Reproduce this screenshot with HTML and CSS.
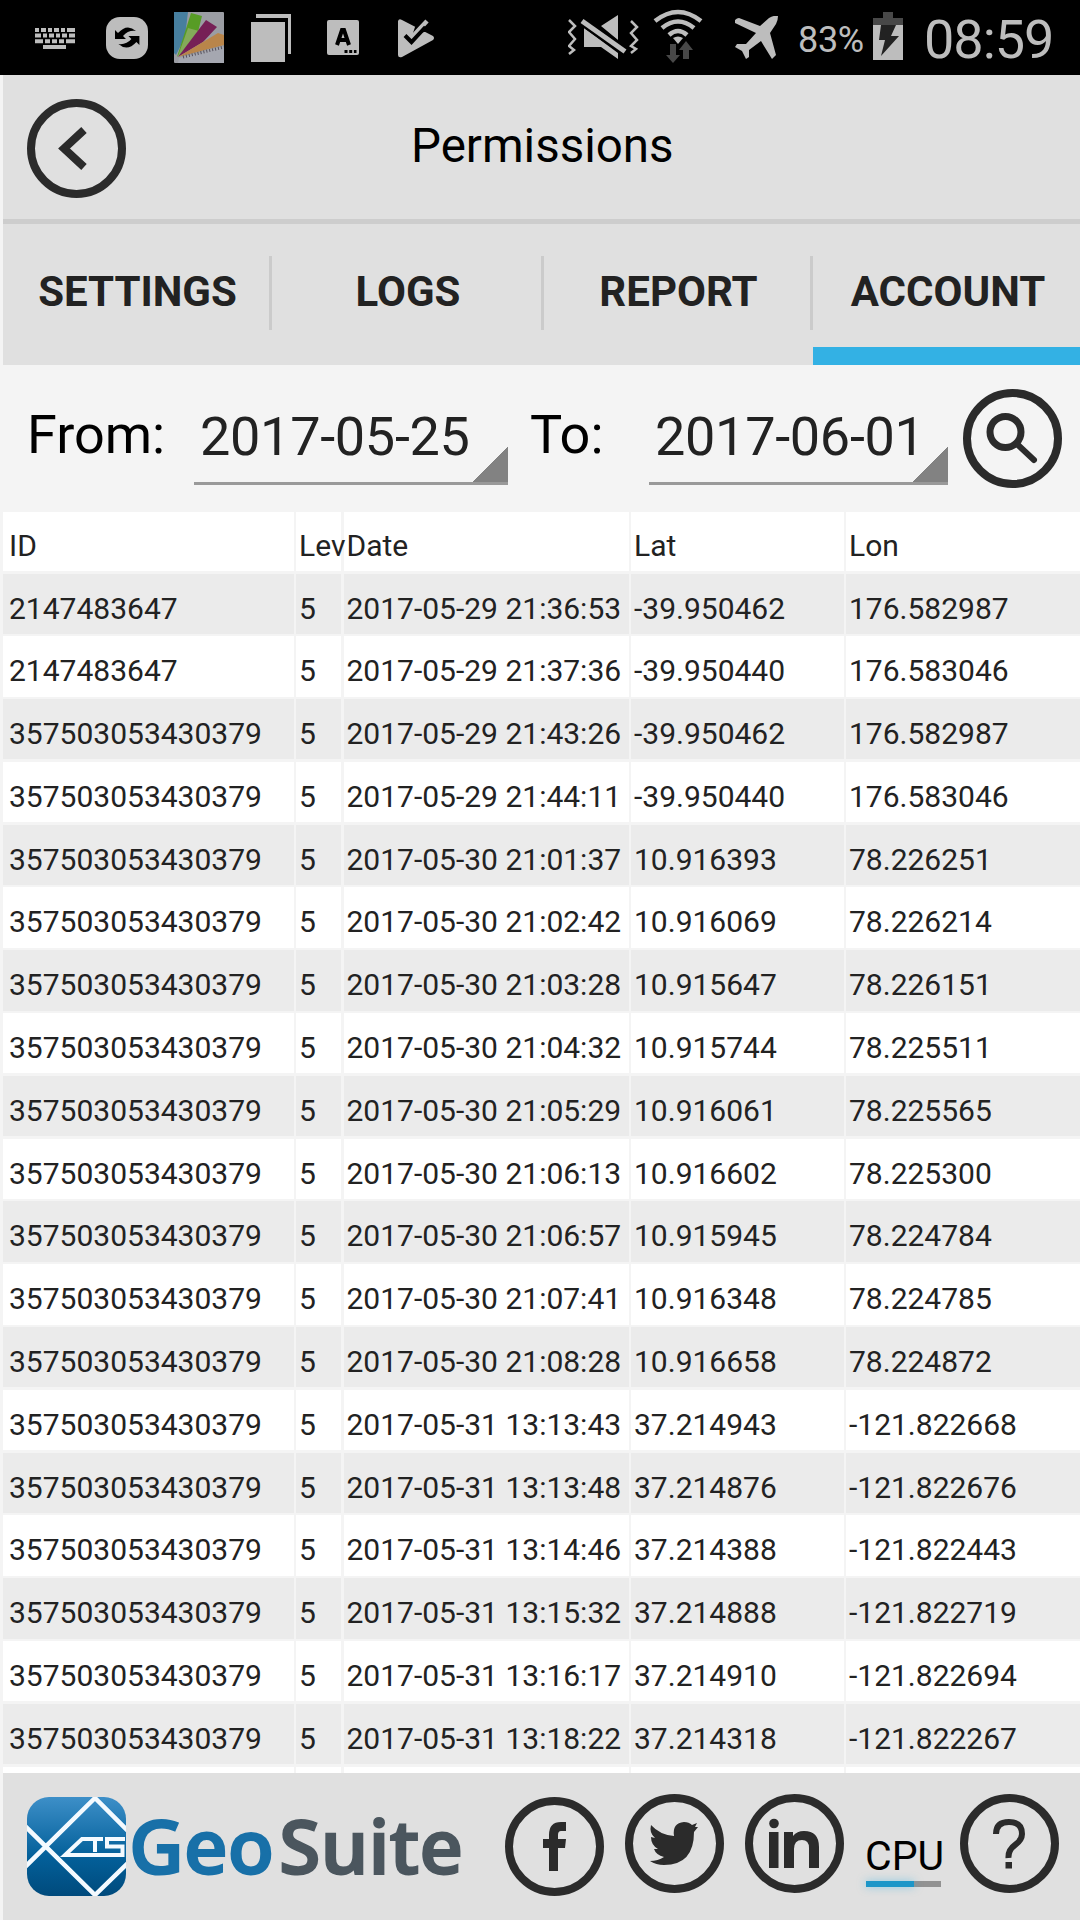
FILE: index.html
```
<!DOCTYPE html>
<html lang="en">
<head>
    <meta charset="UTF-8">
    <title>Permissions</title>
    <link rel="stylesheet" href="styles.css">
</head>
<body>
    <div class="status-bar">
        <svg class="s-keyboard" width="40" height="22" viewBox="35 28 40 22">
            <g stroke="#bdbdbd" stroke-width="4" fill="none">
                <path d="M35 30h40" stroke-dasharray="4 2 5 2 4 2 5 2 4 2 8"/>
                <path d="M35 35.5h40" stroke-dasharray="6 2 4 2 5 2 4 2 5 2 6"/>
                <path d="M35 41.2h40" stroke-dasharray="8 2 5 2 5 2 5 2 9"/>
                <path d="M43 47h23"/>
            </g>
        </svg>
        <svg class="s-sync" width="43" height="43" viewBox="106 17 43 43">
            <rect x="106" y="17" width="42" height="42" rx="14" fill="#bdbdbd"/>
            <path id="arrow" d="M115 30l3 3Q127 23 136 31Q128 30 123 36L126 39H115Z" fill="#000"/>
            <use href="#arrow" transform="rotate(180 127.200 37.500)"/>
        </svg>
        <svg class="s-fan" width="50" height="51" viewBox="174 12 50 51">
            <rect x="174" y="12" width="50" height="51" rx="1" fill="#9b9da3"/>
            <path d="M174 12h14l-3 25-9 18-2-2z" fill="#477f9f"/>
            <path d="M191 13l11 3-5 20-20 21z" fill="#579c25"/>
            <path d="M188 28l11 3-4 8-17 17z" fill="#83ab59"/>
            <path d="M206 20l11 7-14 15-25 15z" fill="#762056"/>
            <path d="M218 33l6 2v10l-46 12z" fill="#b9854a"/>
            <path d="M179 58l45-12v17h-46z" fill="#a5a7b0"/>
            <path d="M183 57l41-10" stroke="#55505c" stroke-width="3" stroke-dasharray="1 2"/>
        </svg>
        <svg class="s-pages" width="40" height="48" viewBox="251 14 40 48">
            <path d="M251 22h34v40h-34zM256 14h35v40h-3v-36h-32z" fill="#bdbdbd"/>
        </svg>
        <svg class="s-lang" width="32" height="35" viewBox="327 20 32 35">
            <rect x="327" y="20" width="32" height="35" rx="2" fill="#bdbdbd"/>
            <path d="M337 45l5-15h2l5 15M339 40h8" stroke="#000" stroke-width="4" fill="none"/>
            <path d="M344.500 51.500h12" stroke="#000" stroke-width="3" stroke-dasharray="3 1.700"/>
        </svg>
        <svg class="s-check" width="36" height="39" viewBox="398 19 36 39">
            <path d="M398 21q1-3 4-1l31 16q2 2 0 4l-31 17q-4 1-4-2z" fill="#bdbdbd"/>
            <path d="M415 27l10-10 11 14-12 1-12 4z" fill="#000"/>
            <path d="M408 32l4.500 4.500L427 21" stroke="#bdbdbd" stroke-width="4.500" fill="none"/>
            <path d="M405 35.500l6.500 6.500 14-15" stroke="#000" stroke-width="4" fill="none"/>
        </svg>
        <svg class="s-mute" width="71" height="46" viewBox="568 14 71 46">
            <path d="M601 26l17-11v25zM584 28v19h17l17 12v-6z" fill="#bdbdbd"/>
            <path d="M581 20l46 32.500" stroke="#000" stroke-width="9.500"/>
            <path d="M582 21l43 30.500" stroke="#bdbdbd" stroke-width="5"/>
            <path d="M569 20l6 6-6 6 6 7-6 7 5 4-5 4M631 21l6 6-6 6 6 7-6 6 5 3-5 4" stroke="#bdbdbd" stroke-width="2.500" fill="none"/>
        </svg>
        <svg class="s-wifi" width="50" height="54" viewBox="653 9 50 54">
            <path d="M655 21q23-18 46 0M662 28q16-13 32 0M669 35q9-8 18 0" stroke="#bdbdbd" stroke-width="4.500" fill="none"/>
            <path d="M673 38q5-3 10 0l-5 6z" fill="#bdbdbd"/>
            <path d="M670 44h6v11h4l-7 8-7-8h4zM683 59h6v-9h4l-7-9-7 9h4z" fill="#484848"/>
        </svg>
        <svg class="s-plane" width="44" height="44" viewBox="735 16 44 44">
            <path d="M735 20q2-2 4-2l21 8 9-8q5-3 9-2 0 4-2 8l-6 9 6 22-4 4-11-18-12 9v7l-3 2-4-8-7-4 2-3 9 0 10-11-21-10z" fill="#bdbdbd"/>
        </svg>
        <span class="battery-text">83%</span>
        <svg class="s-battery" width="30" height="48" viewBox="873 12 30 48">
            <path d="M873 18h10v-6h10v6h10v7h-30z" fill="#484848"/>
            <path d="M873 25h30v35h-30z" fill="#bdbdbd"/>
            <path d="M881 25h15l-5 11h8l-18 20 4-16h-6z" fill="#222"/>
        </svg>
        <span class="clock">08:59</span>
    </div>

    <div class="screen">
        <div class="header">
            <svg class="back" width="99" height="99" viewBox="0 0 99 99">
                <circle cx="49.500" cy="49.500" r="45.500"/>
                <path d="M57 31L37 49.500L57 68"/>
            </svg>
            <h1>Permissions</h1>
        </div>

        <div class="tabs">
            <div class="tab">SETTINGS</div>
            <div class="tab">LOGS</div>
            <div class="tab">REPORT</div>
            <div class="tab active">ACCOUNT</div>
        </div>

        <div class="filter">
            <span class="label from">From:</span>
            <div class="spinner">2017-05-25</div>
            <span class="label to">To:</span>
            <div class="spinner second">2017-06-01</div>
            <svg class="search" width="99" height="99" viewBox="0 0 99 99">
                <circle cx="49.500" cy="49.500" r="45.500"/>
                <circle class="thin" cx="42.500" cy="43" r="15.500"/>
                <path d="M55 56L71 71"/>
            </svg>
        </div>

        <div class="log" id="log">
            <div class="cell head id">ID</div>
            <div class="cell head">Lev</div>
            <div class="cell head">Date</div>
            <div class="cell head">Lat</div>
            <div class="cell head">Lon</div>
        </div>

        <div class="footer">
            <svg class="logo" width="440" height="118" viewBox="0 -12 440 118">
                <defs>
                    <linearGradient id="blue" x1="0" y1="0" x2="0" y2="1">
                        <stop offset="0" stop-color="#3d8fc8"/>
                        <stop offset="0.600" stop-color="#03609a"/>
                        <stop offset="1" stop-color="#004a7c"/>
                    </linearGradient>
                    <clipPath id="tile"><rect width="99" height="99" rx="22"/></clipPath>
                </defs>
                <g clip-path="url(#tile)">
                    <rect width="99" height="99" fill="url(#blue)"/>
                    <path d="M-2 70L68 1L101 34M-2 29L68 98L101 66" stroke="#f4faff" stroke-width="4.500" fill="none"/>
                </g>
                <path d="M98 42H80V49.500H95.500V58H38L55 42H76M68 42V55" stroke="#f4faff" stroke-width="4" fill="none"/>
                <text class="geo" x="102" y="77" textLength="145" lengthAdjust="spacingAndGlyphs">Geo</text>
                <text class="suite" x="252" y="77" textLength="184" lengthAdjust="spacingAndGlyphs">Suite</text>
            </svg>
            <svg class="social facebook" width="99" height="99" viewBox="0 0 99 99">
                <circle cx="49.500" cy="49.500" r="45.500"/>
                <path d="M44 74V51H38V42H44V38Q44 25 56 25H61V34H56Q53 34 53 38V42H61L60 51H53V74Z"/>
            </svg>
            <svg class="social twitter" width="99" height="99" viewBox="0 0 99 99">
                <circle cx="49.500" cy="49.500" r="45.500"/>
                <path d="M26 31Q35 41 49 42Q47 29 59 28Q64 28 67 31L72 29L70 33L73 33L69 38Q69 71 39 71Q31 71 25 67Q33 67 39 63Q31 61 29 55H33Q26 51 26 43L30 44Q24 39 26 31Z"/>
            </svg>
            <svg class="social linkedin" width="99" height="99" viewBox="0 0 99 99">
                <circle cx="49.500" cy="49.500" r="45.500"/>
                <circle class="dot" cx="29" cy="29.500" r="4.800"/>
                <path d="M24 38H33.500V74H24ZM39 38H48V42Q52 37 59 37Q74 37 74 53V74H64V54Q64 46 57 46Q49 46 49 55V74H39Z"/>
            </svg>
            <div class="cpu">
                <span>CPU</span>
                <div class="meter"><div class="meter-fill"></div></div>
            </div>
            <svg class="social help" width="99" height="99" viewBox="0 0 99 99">
                <circle cx="49.500" cy="49.500" r="45.500"/>
                <path class="mark" d="M36 40Q36 28 49 28Q62 28 62 40Q62 46 55 51Q48 56 48.500 64"/>
                <path d="M45.500 68H52V74.500H45.500Z"/>
            </svg>
        </div>
    </div>

    <script>
        const records = [
            ["2147483647", 5, "2017-05-29 21:36:53", "-39.950462", "176.582987"],
            ["2147483647", 5, "2017-05-29 21:37:36", "-39.950440", "176.583046"],
            ["357503053430379", 5, "2017-05-29 21:43:26", "-39.950462", "176.582987"],
            ["357503053430379", 5, "2017-05-29 21:44:11", "-39.950440", "176.583046"],
            ["357503053430379", 5, "2017-05-30 21:01:37", "10.916393", "78.226251"],
            ["357503053430379", 5, "2017-05-30 21:02:42", "10.916069", "78.226214"],
            ["357503053430379", 5, "2017-05-30 21:03:28", "10.915647", "78.226151"],
            ["357503053430379", 5, "2017-05-30 21:04:32", "10.915744", "78.225511"],
            ["357503053430379", 5, "2017-05-30 21:05:29", "10.916061", "78.225565"],
            ["357503053430379", 5, "2017-05-30 21:06:13", "10.916602", "78.225300"],
            ["357503053430379", 5, "2017-05-30 21:06:57", "10.915945", "78.224784"],
            ["357503053430379", 5, "2017-05-30 21:07:41", "10.916348", "78.224785"],
            ["357503053430379", 5, "2017-05-30 21:08:28", "10.916658", "78.224872"],
            ["357503053430379", 5, "2017-05-31 13:13:43", "37.214943", "-121.822668"],
            ["357503053430379", 5, "2017-05-31 13:13:48", "37.214876", "-121.822676"],
            ["357503053430379", 5, "2017-05-31 13:14:46", "37.214388", "-121.822443"],
            ["357503053430379", 5, "2017-05-31 13:15:32", "37.214888", "-121.822719"],
            ["357503053430379", 5, "2017-05-31 13:16:17", "37.214910", "-121.822694"],
            ["357503053430379", 5, "2017-05-31 13:18:22", "37.214318", "-121.822267"],
            ["", "", "", "", ""]
        ];

        // Fill the log, shading every other row
        const log = document.getElementById("log");
        records.forEach((record, index) => {
            record.forEach((value, column) => {
                const cell = document.createElement("div");
                cell.className = "cell";
                if (column === 0) cell.classList.add("id");
                if (index % 2 === 0) cell.classList.add("shaded");
                cell.textContent = value;
                log.appendChild(cell);
            });
        });
    </script>
</body>
</html>
```
FILE: styles.css
```
* {
    box-sizing: border-box;
}

body {
    margin: 0;
    width: 1080px;
    height: 1920px;
    overflow: hidden;
    background: #f4f4f4;
    color: #222;
    font-family: Roboto, sans-serif;
}

svg {
    display: block;
    flex: none;
}

/* Android status bar */
.status-bar {
    display: flex;
    align-items: flex-start;
    height: 75px;
    background: #000;
    color: #bdbdbd;
}

.s-keyboard { margin: 28px 0 0 35px; }
.s-sync { margin: 17px 0 0 31px; }
.s-fan { margin: 12px 0 0 25px; }
.s-pages { margin: 14px 0 0 27px; }
.s-lang { margin: 20px 0 0 36px; }
.s-check { margin: 19px 0 0 39px; }
.s-mute { margin: 14px 0 0 134px; }
.s-wifi { margin: 9px 0 0 14px; }
.s-plane { margin: 16px 0 0 32px; }
.s-battery { margin-top: 12px; }

.battery-text {
    width: 75px;
    margin: 19px 0 0 19px;
    font-size: 36px;
    line-height: 42px;
    letter-spacing: -0.300px;
}

.clock {
    margin: 8px 0 0 21px;
    font-size: 54px;
    line-height: 64px;
    letter-spacing: -1px;
}

.screen {
    display: flex;
    flex-direction: column;
    height: 1845px;
    padding-left: 3px;
}

/* Title bar */
.header {
    display: flex;
    height: 149px;
    padding: 24px 0 0 24px;
    background: #e0e0e0;
    border-bottom: 5px solid #cdcdcd;
}

.back, .search {
    fill: none;
    stroke: #2b2b2b;
    stroke-width: 8px;
}

.header h1 {
    margin: 19px 0 0 285px;
    font-size: 47.500px;
    font-weight: normal;
    line-height: 56px;
    color: #000;
}

/* Tabs */
.tabs {
    display: grid;
    grid-template-columns: 269px 272px 269px 1fr;
    height: 141px;
    background: #e0e0e0;
}

.tab {
    display: flex;
    justify-content: center;
    padding-top: 43px;
    font-size: 42px;
    font-weight: bold;
    line-height: 50px;
    background: linear-gradient(#cbcbcb, #cbcbcb) right 32px / 3px 74px no-repeat;
}

.tab.active {
    padding-left: 3px;
    border-bottom: 18px solid #33b1e4;
    background: none;
}

/* Date filter */
.filter {
    display: flex;
    height: 147px;
    color: #000;
}

.label {
    padding-top: 38px;
    font-size: 54px;
    line-height: 64px;
}

.from {
    width: 191px;
    padding-left: 24px;
}

.to {
    width: 141px;
    padding-left: 22px;
}

.spinner {
    width: 314px;
    height: 120px;
    padding: 40px 0 0 6px;
    font-size: 54px;
    line-height: 64px;
    letter-spacing: -0.300px;
    color: #222;
    border-bottom: 3px solid #999;
    background: linear-gradient(135deg, transparent 50%, #828282 50%) right bottom / 35px 36px no-repeat;
}

.spinner.second {
    width: 299px;
}

.search {
    margin: 24px 0 0 15px;
    stroke-linecap: round;
}

.search .thin {
    stroke-width: 7px;
}

.search path {
    stroke-width: 6px;
}

/* Log table */
.log {
    display: grid;
    grid-template-columns: 290.500px 45px 285px 212.500px 1fr;
    grid-template-rows: 59px;
    grid-auto-rows: 60.300px;
    gap: 2.500px;
    height: 1261px;
    overflow: hidden;
}

.cell {
    padding: 17px 0 0 3px;
    background: #fff;
    font-size: 30px;
    line-height: 36px;
    white-space: nowrap;
}

.cell.id {
    padding-left: 6px;
}

.cell.shaded {
    background: #ebebeb;
}

/* Long headings run over into the next column */
.cell.head {
    padding-top: 16px;
    background: linear-gradient(#fff, #fff);
}

.cell.head:nth-child(2) {
    position: relative;
    background: none;
    box-shadow: inset 0 0 0 60px #fff;
}

/* Footer */
.footer {
    display: flex;
    height: 147px;
    padding: 21px 0 0 24px;
    background: #e0e0e0;
}

.logo {
    margin-top: -9px;
}

.logo text {
    font-family: "Open Sans", sans-serif;
    font-size: 75px;
    font-weight: 600;
    stroke-width: 2px;
}

.geo {
    fill: #1870a8;
    stroke: #1870a8;
}

.suite {
    fill: #4b565e;
    stroke: #4b565e;
}

.social {
    fill: #2b2b2b;
}

.social circle {
    fill: none;
    stroke: #2b2b2b;
    stroke-width: 8px;
}

.social .dot {
    fill: #2b2b2b;
    stroke: none;
}

.social .mark {
    fill: none;
    stroke: #2b2b2b;
    stroke-width: 6px;
}

.facebook { margin: 3px 0 0 38px; }
.twitter { margin-left: 21px; }
.linkedin { margin-left: 21px; }
.help { margin-left: 15px; }

.cpu {
    width: 80px;
    margin-left: 21px;
    padding-top: 38px;
    font-size: 41px;
    line-height: 48px;
    color: #000;
}

.cpu span {
    display: block;
}

.meter {
    width: 75px;
    height: 6px;
    margin: 1px 0 0 1px;
    background: #929292;
}

.meter-fill {
    width: 48px;
    height: 6px;
    background: #1c96c8;
    box-shadow: 0 0 8px rgba(51, 177, 228, 0.500);
}
```
